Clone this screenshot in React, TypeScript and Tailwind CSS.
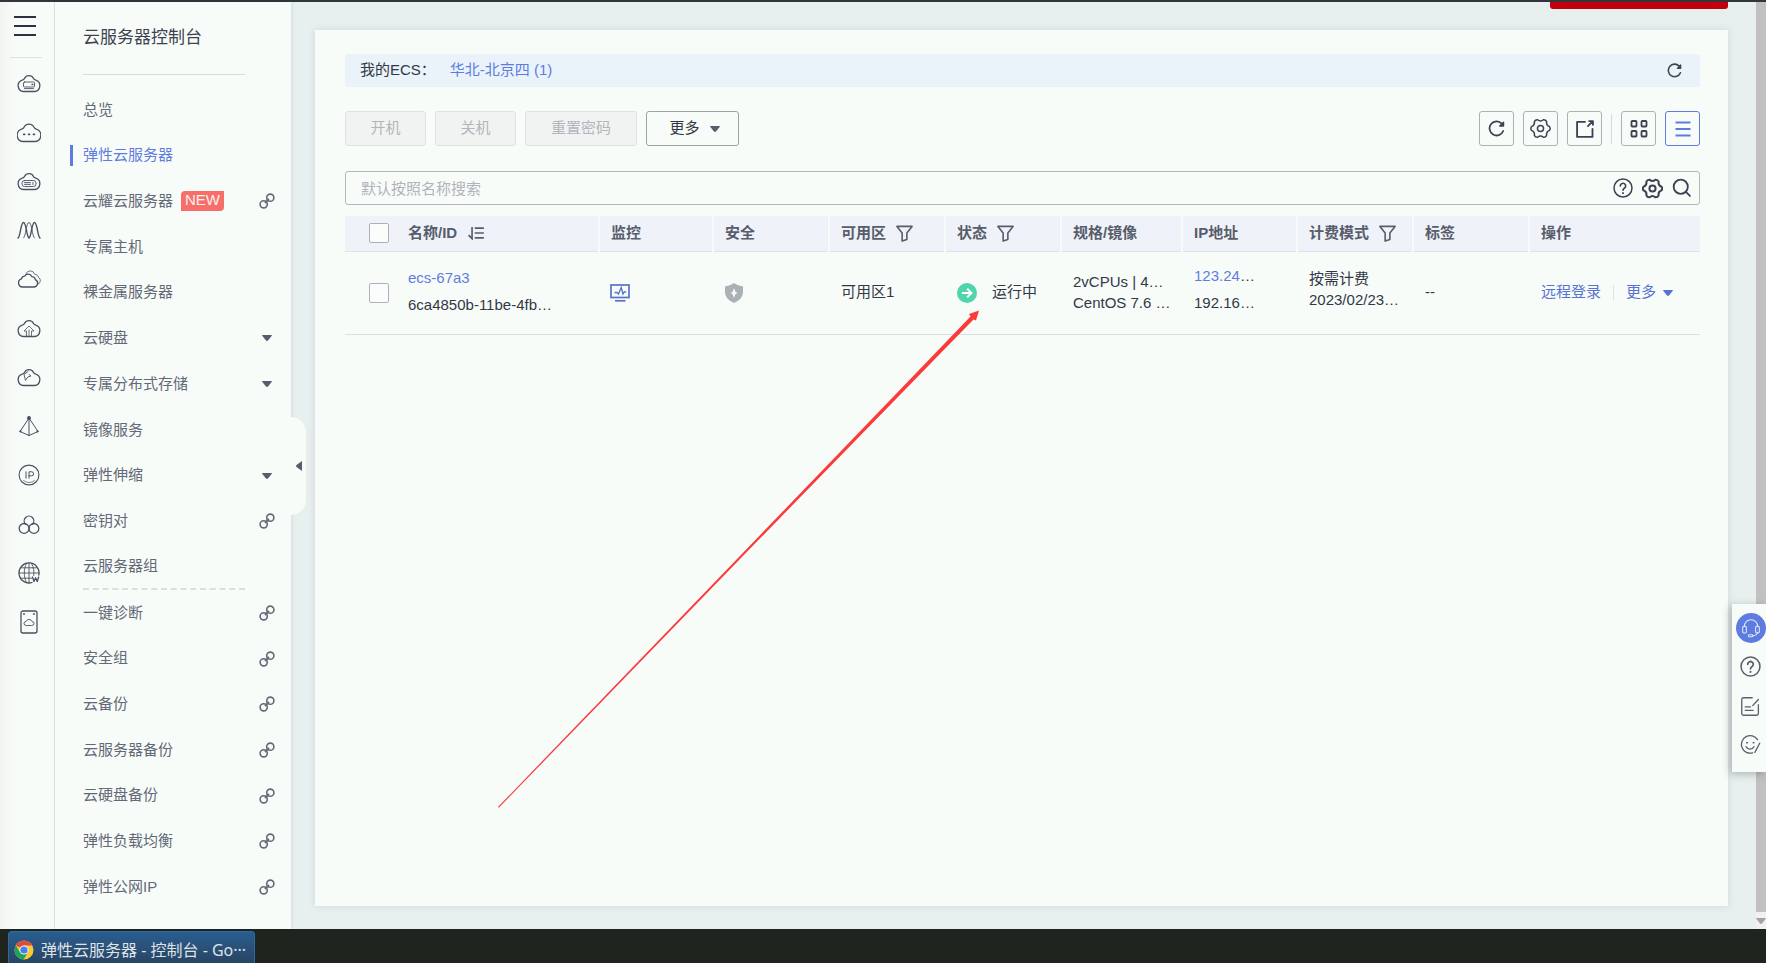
import type { ReactNode } from "react";
import clsx from "clsx";

interface IconProps {
  className?: string;
}

interface MenuItem {
  label: string;
  tail?: "link" | "caret";
  active?: boolean;
  isNew?: boolean;
  dashed?: boolean;
}

const menuItems: MenuItem[] = [
  { label: "总览" },
  { label: "弹性云服务器", active: true },
  { label: "云耀云服务器", isNew: true, tail: "link" },
  { label: "专属主机" },
  { label: "裸金属服务器" },
  { label: "云硬盘", tail: "caret" },
  { label: "专属分布式存储", tail: "caret" },
  { label: "镜像服务" },
  { label: "弹性伸缩", tail: "caret" },
  { label: "密钥对", tail: "link" },
  { label: "云服务器组", dashed: true },
  { label: "一键诊断", tail: "link" },
  { label: "安全组", tail: "link" },
  { label: "云备份", tail: "link" },
  { label: "云服务器备份", tail: "link" },
  { label: "云硬盘备份", tail: "link" },
  { label: "弹性负载均衡", tail: "link" },
  { label: "弹性公网IP", tail: "link" },
];

//#region Icons

const CLOUD =
  "M6.5 20.5A5.8 5.8 0 0 1 5.2 9.200Q6.900 8.800 7.500 7.500A5 5 0 0 1 16.500 7.500Q17.100 8.800 18.800 9.200A5.800 5.800 0 0 1 17.500 20.500Z";

const polar = (deg: number, r: number) => {
  const rad = (deg * Math.PI) / 180;
  return `${(12 + r * Math.cos(rad)).toFixed(2)} ${(12 + r * Math.sin(rad)).toFixed(2)}`;
};

// six rounded teeth
const GEAR =
  `M${polar(-12, 10.5)}` +
  [0, 60, 120, 180, 240, 300]
    .map((a) => `Q${polar(a, 11.8)} ${polar(a + 12, 10.5)}Q${polar(a + 30, 7.2)} ${polar(a + 48, 10.5)}`)
    .join("") +
  "Z";

const railIcons: { name: string; shape: ReactNode }[] = [
  {
    name: "弹性云服务器",
    shape: (
      <>
        <path d={CLOUD} />
        <rect x="6.500" y="11" width="11" height="5" rx="1" strokeWidth="0.9" />
        <path d="M7.500 17.600h9" strokeWidth="0.9" />
        <path d="M15 13.500h.8" strokeWidth="1.4" />
      </>
    ),
  },
  {
    name: "云耀云服务器",
    shape: (
      <>
        <path d="M6.200 21.500A6.300 6.300 0 0 1 4.600 9.200Q6.300 8.800 7 7.300A5.500 5.500 0 0 1 17 7.300Q17.700 8.800 19.400 9.200A6.300 6.300 0 0 1 17.800 21.500Z" />
        <path d="M6.700 14.300h.9M11.600 14.300h.9M16.500 14.300h.9" strokeWidth="1.800" />
      </>
    ),
  },
  {
    name: "裸金属服务器",
    shape: (
      <>
        <path d={CLOUD} />
        <rect x="5" y="11.500" width="14" height="6" rx="2.500" strokeWidth="0.9" />
        <path d="M7.500 13.600h6M7.500 15.400h6M16 13.300v2.400" strokeWidth="0.9" />
      </>
    ),
  },
  {
    name: "弹性伸缩",
    shape: (
      <>
        <path d="M1 20C3.500 19 3.500 4.500 6.500 4.500S9.500 19 12 20M12 20c2.500-1 2.500-15.500 5.500-15.500S20.500 19 23 20" strokeWidth="1.400" />
        <path d="M6.500 20C9 19 9 4.500 12 4.500s3 14.500 5.500 15.500" strokeWidth="0.9" />
      </>
    ),
  },
  {
    name: "专属云",
    shape: (
      <>
        <path d="M5.500 20a4.200 4.200 0 0 1-1-8.200C5 10 6.200 9.200 7.600 9.200A4 4 0 0 1 14.800 9.600C16.600 9.600 18 10.800 18.400 12.600A3.900 3.900 0 0 1 16.500 20Z" />
        <path d="M9 6.600A4.600 4.600 0 0 1 17.600 7.200c2 .2 3.500 1.400 3.900 3.100A4 4 0 0 1 20.500 17.500" strokeWidth="0.8" />
      </>
    ),
  },
  {
    name: "云备份",
    shape: (
      <>
        <path d={CLOUD} />
        <path d="M9.500 20V15H7l5-5 5 5h-2.500v5M12 14v5.500" strokeWidth="0.8" />
      </>
    ),
  },
  {
    name: "云硬盘",
    shape: (
      <>
        <path d={CLOUD} />
        <path d="M11 6.500 7 9.500l1.500 6 2-3.300 3.500-1.200-2-1.500" strokeWidth="0.9" />
      </>
    ),
  },
  {
    name: "虚拟私有云",
    shape: (
      <>
        <path d="M12 4 3 17.500 12 21.500l9-4L12 4v17.500" strokeWidth="1" />
        <circle cx="12" cy="4" r="1.300" fill="currentColor" />
        <circle cx="3.400" cy="17.300" r=".5" fill="currentColor" />
        <circle cx="20.600" cy="17.300" r=".5" fill="currentColor" />
      </>
    ),
  },
  {
    name: "弹性公网IP",
    shape: (
      <>
        <circle cx="12" cy="12" r="9.900" strokeWidth="1.100" />
        <path d="M9 8.800v6.400M12 15.200V8.800h2.600a2 2 0 0 1 0 4H12" strokeWidth="1" />
        <path d="M6.500 17.500a8 8 0 0 0 11 0" strokeWidth="0.7" />
      </>
    ),
  },
  {
    name: "云容器",
    shape: (
      <>
        <path d="M8.500 12.200a4.800 4.800 0 1 1 7 0" />
        <circle cx="7.100" cy="16.400" r="4.900" />
        <circle cx="16.900" cy="16.400" r="4.900" />
      </>
    ),
  },
  {
    name: "域名",
    shape: (
      <>
        <path d="M15 21.500A10 10 0 1 1 21.800 14" />
        <path d="M2 12h20M12 2v20M4 6.800h16M4 17.200h11M9.500 2.500c-3 5-3 14 0 19M14.500 2.500c2.500 4 2.800 8.500 2.200 12" strokeWidth="0.9" />
        <path d="m15.500 16 1.500 4.500 1.600-3.800 1.600 3.800 1.500-4.500" strokeWidth="1.300" />
      </>
    ),
  },
  {
    name: "镜像服务",
    shape: (
      <>
        <rect x="4" y="1" width="16" height="22" rx="2" />
        <path d="M9 15.500a2 2 0 0 1 0-4 3.200 3.200 0 0 1 6 0 2 2 0 0 1 0 4Z" strokeWidth="0.9" />
        <path d="M6.500 4h1M16.500 4h1" />
      </>
    ),
  },
];

function Svg({ className, children }: IconProps & { children: ReactNode }) {
  return (
    <svg
      viewBox="0 0 24 24"
      className={clsx("shrink-0", className)}
      fill="none"
      stroke="currentColor"
      strokeWidth="1.300"
      strokeLinecap="round"
      strokeLinejoin="round"
      aria-hidden="true"
    >
      {children}
    </svg>
  );
}

function Caret({ className }: IconProps) {
  return (
    <svg viewBox="0 0 10 6" className={clsx("h-[6px] w-[10px] shrink-0", className)} aria-hidden="true">
      <path d="M.3 0h9.400Q10 .6 9.600 1L6 5.500Q5 6.300 4 5.500L.4 1Q0 .6.3 0Z" fill="currentColor" />
    </svg>
  );
}

function LinkIcon() {
  return (
    <svg viewBox="0 0 16 16" className="h-4 w-4 shrink-0" fill="none" stroke="currentColor" strokeWidth="1.600" aria-hidden="true">
      <circle cx="11.300" cy="4.700" r="3.600" />
      <circle cx="4.700" cy="11.300" r="3.600" />
      <path d="m6 10 4-4" strokeWidth="1.800" />
    </svg>
  );
}

function RefreshIcon({ className }: IconProps) {
  return (
    <Svg className={className}>
      <path d="M19.500 5A10 10 0 1 0 21.500 15.500" strokeWidth="2.500" />
      <path d="M22 3v5.500h-5.500Z" fill="currentColor" strokeWidth="1.800" />
    </Svg>
  );
}

function GearIcon({ className, thin }: IconProps & { thin?: boolean }) {
  return (
    <Svg className={className}>
      <g strokeWidth={thin ? 1.700 : 2.300}>
        <path d={GEAR} />
        <circle cx="12" cy="12" r="3.500" />
      </g>
    </Svg>
  );
}

function HelpIcon({ className }: IconProps) {
  return (
    <Svg className={className}>
      <circle cx="12" cy="12" r="10.800" strokeWidth="1.800" />
      <path d="M8.800 9.500a3.200 3.200 0 1 1 4.800 2.800c-1.200.7-1.600 1.200-1.600 2.400" strokeWidth="2" />
      <path d="M12 18v.3" strokeWidth="2.200" />
    </Svg>
  );
}

function FilterIcon() {
  return (
    <svg viewBox="0 0 18 18" className="h-[17px] w-[17px]" fill="none" stroke="currentColor" strokeWidth="1.700" strokeLinejoin="round" aria-hidden="true">
      <path d="M1 1.500h16L11.500 8.500v6.800L6.500 17V8.500Z" />
    </svg>
  );
}

function SortIcon() {
  return (
    <svg viewBox="0 0 19 16" className="h-[14px] w-[18px]" fill="none" stroke="currentColor" strokeWidth="1.900" aria-hidden="true">
      <path d="M5 1v13.500L1 10.500M8 2.500h10.500M8 8h10.500M8 13.500h10.500" />
    </svg>
  );
}

function ChromeIcon() {
  return (
    <svg viewBox="0 0 20 20" className="h-5 w-5 shrink-0" aria-hidden="true">
      <circle cx="10" cy="10" r="9.500" fill="#fbc934" />
      <path d="M10 10 1.800 5.200A9.500 9.500 0 0 1 18.200 5.500H10Z" fill="#dd4b3e" />
      <path d="M1.800 5.200A9.500 9.500 0 0 0 9.600 19.500L13.900 12.200 10 10 6 12.300Z" fill="#1ea261" />
      <circle cx="10" cy="10" r="4.500" fill="#f4f4f4" />
      <circle cx="10" cy="10" r="3.600" fill="#4382ec" />
    </svg>
  );
}

//#endregion

function Rail() {
  return (
    <nav
      aria-label="服务列表"
      className="w-[55px] shrink-0 border-r border-[#dfe4e4] bg-linear-to-r from-[#f3f4f2] to-[#f8fcf9] to-30% text-[#4a5060]"
    >
      <button aria-label="展开菜单" className="ml-3.5 mt-[13px] flex h-[22px] flex-col justify-between py-[1px]">
        <span className="h-[2px] w-[22px] bg-[#2b3240]" />
        <span className="h-[2px] w-[22px] bg-[#2b3240]" />
        <span className="h-[2px] w-[22px] bg-[#2b3240]" />
      </button>
      <hr className="ml-[10px] mr-3 mt-5 border-[#dfe1e0]" />
      <ul>
        {railIcons.map(({ name, shape }) => (
          <li key={name}>
            <a href="#" aria-label={name} className="flex h-[49px] items-center justify-center pl-1">
              <Svg className="h-6 w-6">{shape}</Svg>
            </a>
          </li>
        ))}
      </ul>
    </nav>
  );
}

function Sidebar() {
  return (
    <aside className="relative flex w-[236px] shrink-0 flex-col bg-[#f8fcf9] pb-[19px] shadow-[1px_0_4px_rgba(0,0,0,0.08)]">
      <div className="ml-7 mr-[46px] flex h-[73px] items-center border-b border-[#d6dbdb]">
        <h1 className="text-[17px] text-[#3c4250]">云服务器控制台</h1>
      </div>
      <ul className="mt-3 grid flex-1 auto-rows-fr">
        {menuItems.map((item) => (
          <li
            key={item.label}
            className={clsx(
              "relative ml-7 flex min-h-11 items-center",
              item.dashed ? "mr-[46px] border-b-2 border-dashed border-[#dadfdf]" : "mr-4"
            )}
          >
            {item.active && <span className="absolute -left-[13px] h-[21px] w-[3px] bg-[#5e7ce0]" />}
            <a
              href="#"
              className={clsx("flex flex-1 items-center", item.active ? "text-[#5e7ce0]" : "text-[#636977]")}
            >
              {item.label}
              {item.isNew && (
                <span className="ml-2 h-5 rounded-tl rounded-br bg-[#f66f6a] px-1 text-[15px] leading-[18px] text-[#fff0ee]">
                  NEW
                </span>
              )}
              {item.tail === "link" && (
                <span className="ml-auto">
                  <LinkIcon />
                </span>
              )}
              {item.tail === "caret" && <Caret className="ml-auto mr-[3px] text-[#575d6c]" />}
            </a>
          </li>
        ))}
      </ul>
      <button
        aria-label="收起菜单"
        className="absolute -right-[15px] top-[415px] flex h-[98px] w-[15px] items-center justify-center rounded-r-[15px] bg-[#f8fcf9]"
      >
        <svg viewBox="0 0 6 10" className="h-[10px] w-[6px]" aria-hidden="true">
          <path d="M6 0v10L.5 6Q-.3 5 .5 4Z" fill="#575d6c" />
        </svg>
      </button>
    </aside>
  );
}

const disabledButton = "h-[35px] rounded-[3px] border border-[#dfe1e6] bg-[#f0f3f1] text-[#b2b5bc]";
const toolButton = "flex h-[35px] w-[35px] items-center justify-center rounded-[3px] border";

function Toolbar() {
  return (
    <div className="mt-6 flex items-center gap-[9px]">
      <button disabled className={clsx(disabledButton, "w-[81px]")}>
        开机
      </button>
      <button disabled className={clsx(disabledButton, "w-[81px]")}>
        关机
      </button>
      <button disabled className={clsx(disabledButton, "w-[112px]")}>
        重置密码
      </button>
      <button className="flex h-[35px] w-[93px] items-center justify-center gap-2.5 rounded-[3px] border border-[#9da1a9] pl-1 text-[#323846]">
        更多
        <Caret className="text-[#575d6c]" />
      </button>

      <div className="ml-auto flex items-center gap-[9px] text-[#3c4254]">
        <button aria-label="刷新" className={clsx(toolButton, "border-[#adb0b8]")}>
          <RefreshIcon className="h-[17px] w-[17px]" />
        </button>
        <button aria-label="设置" className={clsx(toolButton, "border-[#adb0b8]")}>
          <GearIcon className="h-[21px] w-[21px]" thin />
        </button>
        <button aria-label="导出" className={clsx(toolButton, "border-[#adb0b8]")}>
          <Svg className="h-5 w-5">
            <path d="M12 3.500H2.500v18h18.500V12" strokeWidth="2.200" />
            <path d="m15.500 8.500 5-5M17 2.500h4.500v4.500" strokeWidth="2.200" />
          </Svg>
        </button>
        <span className="h-[30px] w-px bg-[#d5d9da]" />
        <button aria-label="卡片视图" className={clsx(toolButton, "border-[#adb0b8]")}>
          <svg viewBox="0 0 18 18" className="h-[18px] w-[18px]" fill="none" stroke="currentColor" strokeWidth="1.800" aria-hidden="true">
            <rect x="1.500" y="1" width="5" height="5.500" rx=".8" />
            <rect x="11.500" y="1" width="5" height="5.500" rx=".8" />
            <rect x="1.500" y="11" width="5" height="5.500" rx=".8" />
            <rect x="11.500" y="11" width="5" height="5.500" rx=".8" />
          </svg>
        </button>
        <button aria-label="列表视图" className={clsx(toolButton, "border-[#5e7ce0] text-[#5e7ce0]")}>
          <svg viewBox="0 0 16 16" className="h-4 w-4" fill="none" stroke="currentColor" strokeWidth="1.800" aria-hidden="true">
            <path d="M.5 1.500h15M.5 8h15M.5 14.500h15" />
          </svg>
        </button>
      </div>
    </div>
  );
}

function SearchBar() {
  return (
    <div className="mt-[25px] flex h-[34px] items-center rounded-[3px] border border-[#b4b7be] pl-[15px] pr-[7px] text-[#3c4254]">
      <input
        type="text"
        aria-label="搜索"
        placeholder="默认按照名称搜索"
        className="h-full flex-1 bg-transparent outline-none placeholder:text-[#b0b3ba]"
      />
      <div className="flex items-center gap-[9px]">
        <button aria-label="帮助">
          <HelpIcon className="h-5 w-5" />
        </button>
        <button aria-label="搜索设置">
          <GearIcon className="h-[21px] w-[21px]" />
        </button>
        <button aria-label="搜索">
          <Svg className="h-5 w-5">
            <circle cx="10.500" cy="10.500" r="8.500" strokeWidth="2.200" />
            <path d="m17 17 4.500 4.500" strokeWidth="2.200" />
          </Svg>
        </button>
      </div>
    </div>
  );
}

const columns = [
  { title: "监控" },
  { title: "安全" },
  { title: "可用区", filter: true },
  { title: "状态", filter: true },
  { title: "规格/镜像" },
  { title: "IP地址" },
  { title: "计费模式", filter: true },
  { title: "标签" },
  { title: "操作" },
];

const checkbox = "block h-5 w-5 appearance-none rounded-[2px] border border-[#adb0b8] bg-[#fafdfb]";

function ServerTable() {
  return (
    <table className="mt-[11px] w-full table-fixed border-collapse text-left whitespace-nowrap">
      <colgroup>
        <col className="w-[63px]" />
        <col className="w-[191px]" />
        <col className="w-[114px]" />
        <col className="w-[116px]" />
        <col className="w-[116px]" />
        <col className="w-[116px]" />
        <col className="w-[121px]" />
        <col className="w-[115px]" />
        <col className="w-[116px]" />
        <col className="w-[116px]" />
        <col className="w-[171px]" />
      </colgroup>
      <thead className="bg-[#eff2f8] text-[#575d6c]">
        <tr className="h-[35px] border-b border-[#dfe3e8]">
          <th className="pl-6">
            <input type="checkbox" aria-label="全选" className={checkbox} />
          </th>
          <th>
            <span className="flex items-center gap-[10px]">
              名称/ID
              <button aria-label="排序">
                <SortIcon />
              </button>
            </span>
          </th>
          {columns.map((column) => (
            <th key={column.title} className="border-l-2 border-[#f8fcf9] pl-[11px]">
              <span className="flex items-center gap-[10px]">
                {column.title}
                {column.filter && (
                  <button aria-label={`筛选${column.title}`}>
                    <FilterIcon />
                  </button>
                )}
              </span>
            </th>
          ))}
        </tr>
      </thead>
      <tbody className="text-[#323846]">
        <tr className="h-[83px] border-b border-[#d9dfe3]">
          <td className="pl-6">
            <input type="checkbox" aria-label="选择 ecs-67a3" className={checkbox} />
          </td>
          <td className="pb-1 leading-[27px]">
            <a href="#" className="text-[#5e7ce0]">
              ecs-67a3
            </a>
            <div>6ca4850b-11be-4fb…</div>
          </td>
          <td className="pl-[11px]">
            <a href="#" aria-label="监控" className="inline-block align-middle text-[#5872d0]">
              <svg viewBox="0 0 20 18" className="h-[18px] w-5" fill="none" stroke="currentColor" strokeWidth="1.700" aria-hidden="true">
                <rect x="1" y="1" width="18" height="12.500" />
                <path d="M5 16.800h10.500" />
                <path d="M4.500 8.500H7L8.500 10l2.700-6.500L13 10l1.200-2h2" strokeWidth="1.300" />
              </svg>
            </a>
          </td>
          <td className="pl-[11px]">
            <svg viewBox="0 0 20 20" className="h-5 w-5" aria-label="安全">
              <path d="M10 0q4 3.200 9 3.500v6.500q-.8 6.500-9 10-8.200-3.500-9-10V3.500Q6 3.200 10 0Z" fill="#a9b0b6" />
              <path d="M10 5.200 11.500 9l2.200 1-2.200 1L10 15 8.500 11l-2.200-1 2.200-1Z" fill="#f8fcf9" />
            </svg>
          </td>
          <td className="pl-3">可用区1</td>
          <td className="pl-3">
            <span className="flex items-center gap-[15px]">
              <svg viewBox="0 0 20 20" className="h-5 w-5 shrink-0" aria-hidden="true">
                <circle cx="10" cy="10" r="10" fill="#50d4ab" />
                <path d="M4.800 10h9.500M10.200 5.800l4.300 4.200-4.300 4.200" fill="none" stroke="#fff" strokeWidth="1.900" />
              </svg>
              运行中
            </span>
          </td>
          <td className="pb-0.5 pl-3 leading-[21px]">
            <div>2vCPUs | 4…</div>
            <div>CentOS 7.6 …</div>
          </td>
          <td className="pb-2 pl-3 leading-[27px]">
            <div>
              <a href="#" className="text-[#5e7ce0]">
                123.24
              </a>
              …
            </div>
            <div>192.16…</div>
          </td>
          <td className="pb-2 pl-3 leading-[21px]">
            <div>按需计费</div>
            <div>2023/02/23…</div>
          </td>
          <td className="pl-3">--</td>
          <td className="pl-3">
            <span className="flex items-center text-[#5872d0]">
              <a href="#">远程登录</a>
              <span className="mx-3 h-[15px] w-px bg-[#dfe1e6]" />
              <button className="flex items-center gap-[7px]">
                更多
                <Caret />
              </button>
            </span>
          </td>
        </tr>
      </tbody>
    </table>
  );
}

function FloatingHelp() {
  return (
    <div className="absolute right-0 top-[602px] flex h-[168px] w-[34px] flex-col items-center bg-[#f8fcf9] pt-[9px] pl-[3px] text-[#5a606c] shadow-[-2px_2px_8px_rgba(0,0,0,0.25)]">
      <button aria-label="在线客服" className="flex h-[30px] w-[30px] shrink-0 items-center justify-center rounded-full bg-[#5e7ce0] text-[#dfe6fb]">
        <Svg className="h-5 w-5">
          <path d="M4 10a8 8 0 0 1 16 0M20 17c0 2-3 4-6 4.500" />
          <rect x="2" y="10" width="4.500" height="8" rx="1.500" />
          <rect x="17.500" y="10" width="4.500" height="8" rx="1.500" />
          <rect x="9" y="20" width="5" height="2.500" rx="1" />
        </Svg>
      </button>
      <button aria-label="帮助" className="mt-[13px]">
        <HelpIcon className="h-[21px] w-[21px]" />
      </button>
      <button aria-label="反馈" className="mt-[19px]">
        <Svg className="h-[21px] w-[21px]">
          <path d="M14 2H4a2 2 0 0 0-2 2v16a2 2 0 0 0 2 2h15a2 2 0 0 0 2-2V10M21 4l-6.500 7M6 12.500h6M6 16.500h9" strokeWidth="1.500" />
        </Svg>
      </button>
      <button aria-label="评价" className="mt-[17px]">
        <Svg className="h-[21px] w-[21px]">
          <path d="M20 6.500A10 10 0 1 0 14.500 21.500M22.500 10.500 17 21" strokeWidth="1.500" />
          <path d="M7 14.500a5 5 0 0 0 9 0M7.500 10h1M15 10h1" strokeWidth="1.500" />
        </Svg>
      </button>
    </div>
  );
}

export default function App() {
  return (
    <div className="relative flex min-h-screen flex-col border-t-2 border-[#34343c] bg-[#e8efef] font-['Liberation_Sans','Noto_Sans_CJK_SC',sans-serif] text-[15px]">
      <div className="flex flex-1">
        <Rail />
        <Sidebar />

        <main className="flex min-w-0 flex-1 flex-col pb-[23px] pl-6 pr-7">
          <button aria-label="购买弹性云服务器" className="h-[7px] w-[178px] self-end rounded-b-[3px] bg-[#c2000b]" />
          <section className="mt-[21px] flex-1 bg-[#f8fcf9] pb-6 pl-[30px] pr-7 pt-6 shadow-[0_0_8px_rgba(60,60,90,0.12)]">
            <div className="flex h-[33px] items-center rounded-[3px] bg-[#e9f3f9] pl-[15px] pr-[18px]">
              <span className="text-[#323846]">我的ECS：</span>
              <a href="#" className="ml-3.5 text-[#5e7ce0]">
                华北-北京四 (1)
              </a>
              <button aria-label="刷新区域" className="ml-auto text-[#3f4552]">
                <RefreshIcon className="h-[15px] w-[15px]" />
              </button>
            </div>
            <Toolbar />
            <SearchBar />
            <ServerTable />
          </section>
        </main>

        {/* scroll bar */}
        <div className="flex w-[10px] shrink-0 flex-col bg-[#f1f1f1]">
          <div className="flex-1 bg-[#c1c1c1]" />
          <div className="flex h-[17px] items-center justify-center overflow-hidden text-[#a3a3a3]">
            <Caret className="h-[5px] w-2" />
          </div>
        </div>
      </div>

      <footer className="flex h-[34px] overflow-hidden bg-[#20241f] pl-2 pt-[2px]">
        <button className="flex h-[38px] w-[247px] items-center gap-[7px] rounded-[3px] border border-[#2c6aa3] bg-linear-to-b from-[#295d90] to-[#28415c] pl-[5px] font-['Noto_Sans','Noto_Sans_CJK_SC',sans-serif] text-[16px] whitespace-nowrap text-[#dfe3e6]">
          <ChromeIcon />
          弹性云服务器 - 控制台 - Go···
        </button>
      </footer>

      <FloatingHelp />

      {/* arrow pointing at the instance status */}
      <svg
        viewBox="0 0 482 498"
        className="pointer-events-none absolute left-[498px] top-[308px] h-[498px] w-[482px]"
        aria-hidden="true"
      >
        <path d="M0 497 240 248 472.500 6.500 471 4 481 .5 478 10.500 475.500 9.500 241.500 249.500.8 497.800Z" fill="#fb3b3b" />
      </svg>
    </div>
  );
}
